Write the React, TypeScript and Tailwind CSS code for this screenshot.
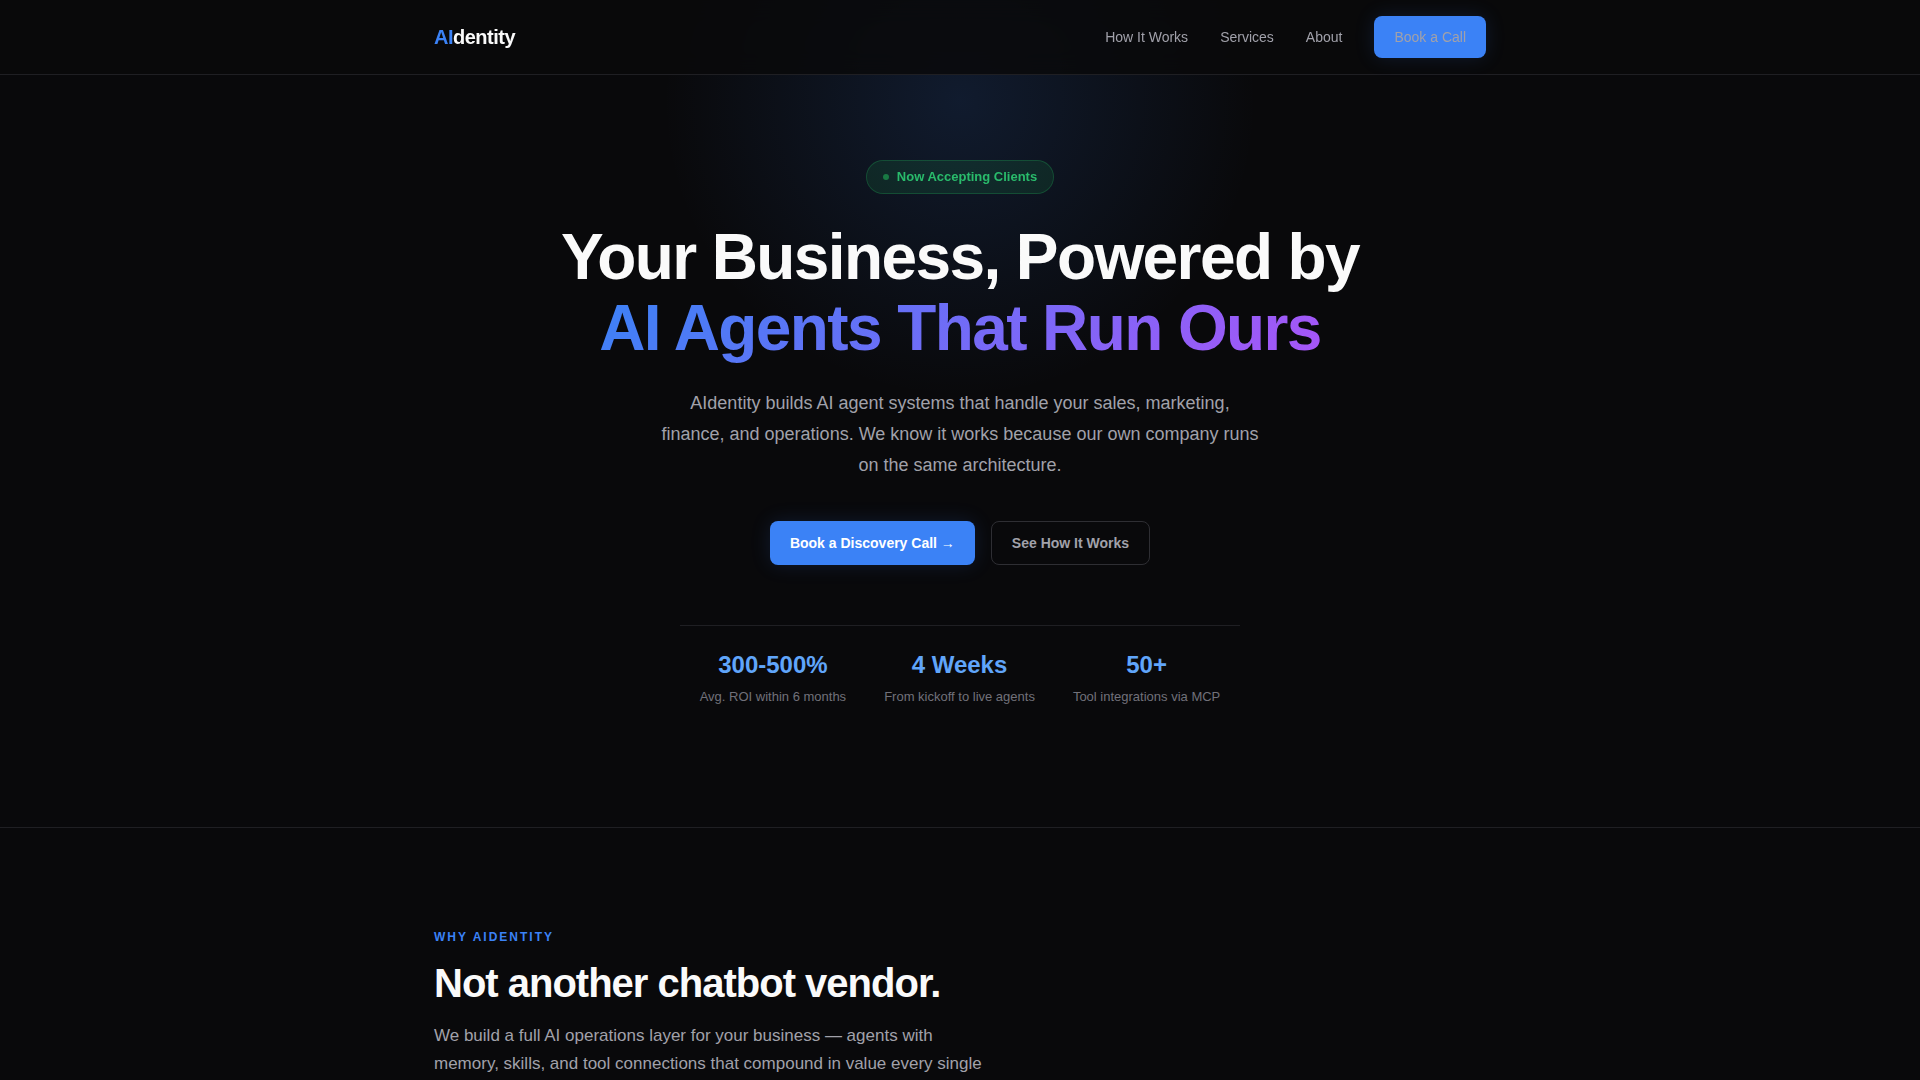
const links = [
  { label: 'How It Works', href: '#how' },
  { label: 'Services', href: '#services' },
  { label: 'About', href: '#about' },
];

const stats = [
  { value: '300-500%', label: 'Avg. ROI within 6 months' },
  { value: '4 Weeks', label: 'From kickoff to live agents' },
  { value: '50+', label: 'Tool integrations via MCP' },
];

function Nav() {
  return (
    <header className="fixed inset-x-0 top-0 z-10 border-b border-[#1f1f23] bg-[rgba(9,9,11,0.85)] backdrop-blur-md">
      <nav className="mx-auto flex max-w-[1100px] items-center justify-between px-6 py-4">
        <a href="#top" className="text-xl font-bold tracking-tight text-[#fafafa]">
          <span className="text-[#3b82f6]">AI</span>dentity
        </a>
        <div className="flex items-center gap-8 text-sm text-[#a1a1aa]">
          {links.map((link) => (
            <a key={link.href} href={link.href}>
              {link.label}
            </a>
          ))}
          <a href="#book" className="rounded-lg bg-[#3b82f6] px-5 py-[11px] shadow-[0_0_20px_rgba(59,130,246,0.15)]">
            Book a Call
          </a>
        </div>
      </nav>
    </header>
  );
}

function Hero() {
  return (
    <section id="top" className="relative overflow-hidden border-b border-[#1f1f23] px-6 pt-40 pb-30 text-center">
      <div className="pointer-events-none absolute -top-[200px] left-1/2 size-[600px] -translate-x-1/2 bg-[radial-gradient(circle,rgba(59,130,246,0.15)_0%,transparent_70%)]" />
      <div className="relative mx-auto flex max-w-[1100px] flex-col items-center">
        <div className="flex items-center gap-2 rounded-full border border-[rgba(34,197,94,0.25)] bg-[rgba(34,197,94,0.12)] px-4 py-[7px] text-[13px] leading-[18px] font-semibold text-[#2bc46f] opacity-95">
          <span className="size-1.5 rounded-full bg-[rgba(34,197,94,0.55)]" />
          Now Accepting Clients
        </div>
        <h1 className="mt-7 text-[64px] leading-[71px] font-bold tracking-tight text-[#fafafa]">
          Your Business, Powered by
          <br />
          <span className="bg-[linear-gradient(135deg,#3b82f6,#a855f7)] bg-clip-text text-transparent">AI Agents That Run Ours</span>
        </h1>
        <p className="mt-6 max-w-[600px] text-lg leading-[31px] text-[#a1a1aa]">
          AIdentity builds AI agent systems that handle your sales, marketing, finance, and operations. We know it works
          because our own company runs on the same architecture.
        </p>
        <div className="mt-10 flex gap-4 text-sm font-semibold">
          <a href="#book" className="rounded-lg bg-[#3b82f6] px-5 py-3 text-white shadow-[0_0_20px_rgba(59,130,246,0.15)]">
            Book a Discovery Call →
          </a>
          <a href="#how" className="rounded-lg border border-[#2e2e33] px-5 py-[11px] text-[#a1a1aa]">
            See How It Works
          </a>
        </div>
        <dl className="mt-15 flex gap-[38px] border-t border-[#1f1f23] px-5 pt-[21px]">
          {stats.map((stat) => (
            <div key={stat.label} className="flex flex-col-reverse gap-1">
              <dt className="text-[13px] leading-5 text-[#71717a]">{stat.label}</dt>
              <dd className="text-2xl leading-9 font-bold text-[#60a5fa]">{stat.value}</dd>
            </div>
          ))}
        </dl>
      </div>
    </section>
  );
}

function Why() {
  return (
    <section className="pt-25">
      <div className="mx-auto max-w-[1100px] px-6">
        <p className="text-xs leading-[18px] font-semibold tracking-[2px] text-[#3b82f6] uppercase">Why AIdentity</p>
        <h2 className="mt-3 text-[40px] leading-[50px] font-bold tracking-tight text-[#fafafa]">
          Not another chatbot vendor.
        </h2>
        <p className="mt-[14px] max-w-[560px] text-[17px] leading-7 text-[#a1a1aa]">
          We build a full AI operations layer for your business — agents with memory, skills, and tool connections that
          compound in value every single
        </p>
      </div>
    </section>
  );
}

export default function App() {
  return (
    <div className="min-h-screen bg-[#09090b] font-['Liberation_Sans',Arial,sans-serif] antialiased">
      <Nav />
      <main>
        <Hero />
        <Why />
      </main>
    </div>
  );
}
